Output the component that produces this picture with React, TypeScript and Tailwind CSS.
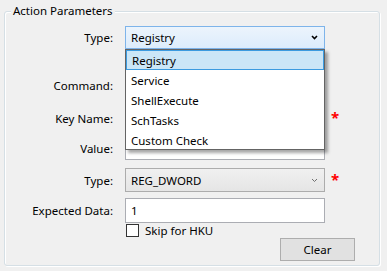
import React from 'react';

const font = { fontFamily: '"Noto Sans", "Open Sans", sans-serif' };

function Chevron({ color, width }: { color: string; width: number }) {
  return (
    <svg width="7" height="5" viewBox="0 0 7 5" className="shrink-0">
      <path d="M1 1 L3.5 3.5 L6 1" fill="none" stroke={color} strokeWidth={width} />
    </svg>
  );
}

function Row({
  label,
  className,
  children,
  required
}: {
  label: string;
  className?: string;
  children?: React.ReactNode;
  required?: boolean;
}) {
  return (
    <div className={`flex items-center ${className ?? ''}`}>
      <div className="w-[109px] text-right pr-[1px] pt-[1px] shrink-0">{label}</div>
      <div className="ml-[11px] w-[200px] h-full shrink-0 relative">{children}</div>
      {required && <span className="ml-[6px] text-[#ff0000] text-[15px] font-bold leading-none -mt-[2px]">*</span>}
    </div>
  );
}

const items = ['Registry', 'Service', 'ShellExecute', 'SchTasks', 'Custom Check'];

export default function App() {
  return (
    <div className="w-[387px] h-[271px] bg-[#f0f0f0] text-[11.5px] text-black overflow-hidden pl-[4px] pt-[11px]" style={font}>
      <div className="relative w-[376px] h-[255px] border border-[#d5dfe5] rounded-[3px] shadow-[inset_1px_1px_0_#ffffff,1px_1px_0_#ffffff]">
        <span className="absolute -top-[10px] left-[6px] px-[2px] bg-[#f0f0f0] leading-[18px]">Action Parameters</span>

        <Row label="Type:" className="mt-[14px] h-[23px] relative z-10">
          <div className="h-full border border-[#7eb4ea] bg-gradient-to-b from-[#ecf4fc] to-[#dcecfc] flex items-center justify-between pl-[5px] pr-[6px]">
            <span className="pt-[1px]">Registry</span>
            <Chevron color="#000" width={1.6} />
          </div>
          <div className="absolute top-full left-0 w-[200px] h-[101px] bg-white border border-[#646464] shadow-[3px_3px_3px_rgba(0,0,0,0.35)]">
            {items.map((it, i) => (
              <div
                key={it}
                className={`h-[20px] flex items-center pl-[5px] pt-[2px] ${i === 0 ? 'bg-[#cbe6f7] border border-[#3c9be0] pl-[4px]' : ''}`}
              >
                {it}
              </div>
            ))}
          </div>
        </Row>

        <Row label="Command:" className="mt-[25px] h-[23px]">
          <div className="h-full border border-[#abadb3] bg-white" />
        </Row>

        <Row label="Key Name:" className="mt-[10px] h-[23px]" required>
          <div className="h-full border border-[#abadb3] bg-white" />
        </Row>

        <Row label="Value:" className="mt-[7px] h-[23px]">
          <div className="h-full border border-[#abadb3] bg-white" />
        </Row>

        <Row label="Type:" className="mt-[8px] h-[24px]" required>
          <div className="h-full border border-[#acacac] bg-gradient-to-b from-[#f0f0f0] to-[#e5e5e5] flex items-center justify-between pl-[5px] pr-[6px]">
            <span className="pt-[1px]">REG_DWORD</span>
            <Chevron color="#707070" width={1} />
          </div>
        </Row>

        <Row label="Expected Data:" className="mt-[6px] h-[25px]">
          <div className="h-full border border-[#abadb3] bg-white flex items-center pl-[5px] pt-[1px]">1</div>
        </Row>

        <div className="flex items-center h-[15px] pl-[121px]">
          <div className="w-[13px] h-[13px] border border-[#333333] bg-white" />
          <span className="ml-[6px]">Skip for HKU</span>
        </div>

        <div className="pl-[275px]">
          <button className="w-[75px] h-[23px] bg-[#e1e1e1] border border-[#adadad] flex items-center justify-center pt-[1px]">
            Clear
          </button>
        </div>
      </div>
    </div>
  );
}
